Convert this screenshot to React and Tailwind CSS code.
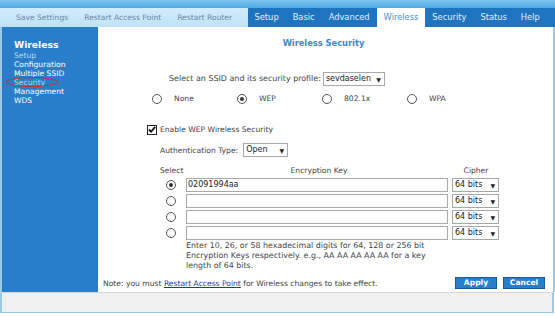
import React from "react";

const Radio = ({ checked }) => (
    <span className="inline-flex w-[10px] h-[10px] rounded-full border border-[#555] bg-white items-center justify-center">
        {checked && <span className="w-[4px] h-[4px] rounded-full bg-[#333]" />}
    </span>
);

const Select = ({ value, className = "" }) => (
    <div className={`flex items-center justify-between h-[14px] border border-[#a8a8a8] bg-white pl-[2px] pr-[3px] text-[8px] text-[#222] ${className}`}>
        <span>{value}</span>
        <span className="text-[6px]">▼</span>
    </div>
);

const App = () => {
    const leftTabs = ["Save Settings", "Restart Access Point", "Restart Router"];
    const rightTabs = ["Setup", "Basic", "Advanced", "Wireless", "Security", "Status", "Help"];
    const menu = [
        { label: "Setup", dim: true },
        { label: "Configuration" },
        { label: "Multiple SSID" },
        { label: "Security", dim: true, circled: true },
        { label: "Management" },
        { label: "WDS" },
    ];
    const keys = ["02091994aa", "", "", ""];

    return (
        <div className="w-[555px] h-[316px] bg-white overflow-hidden text-[#444]" style={{ fontFamily: '"DejaVu Sans", Verdana, sans-serif' }}>
            {/* top band */}
            <div className="h-[8px] bg-gradient-to-b from-[#7cc6f0] to-[#4da9e6]" />

            {/* tab bar */}
            <div className="flex h-[19px]">
                <div className="w-[248px] flex items-center bg-gradient-to-b from-[#d2ecfa] to-[#bfe2f7] text-[#6787a8] text-[7.6px]">
                    {leftTabs.map((t) => (
                        <span key={t} className="ml-[16px]">{t}</span>
                    ))}
                </div>
                <div className="flex-1 flex items-stretch bg-[#1f74c0] text-[#e4eef8] text-[8.3px]">
                    {rightTabs.map((t) => (
                        <span
                            key={t}
                            className={`flex items-center px-[6.5px] mr-[1px] ${t === "Wireless" ? "bg-white text-[#4a8fd0]" : ""}`}
                        >
                            {t}
                        </span>
                    ))}
                </div>
            </div>

            {/* body */}
            <div className="flex h-[265px] border-l-[2px] border-[#9cc8ea]">
                <div className="w-[96px] bg-[#2a7dc9] pl-[12px] pt-[12px]">
                    <div className="text-[9.2px] font-bold text-white leading-[12px]">Wireless</div>
                    <div className="text-[7.6px] leading-[9px]">
                        {menu.map((m) => (
                            <div key={m.label} className={`relative ${m.dim ? "text-[#b4d8f5]" : "text-white"}`}>
                                {m.label}
                                {m.circled && (
                                    <span className="absolute left-[-8px] top-[-1px] w-[52px] h-[10px] rounded-[50%] border-[1.5px] border-[#e0202a]" />
                                )}
                            </div>
                        ))}
                    </div>
                </div>

                <div className="flex-1 flex flex-col border-r-[2px] border-[#9cc8ea] text-[7.6px]">
                    <div className="text-center font-bold text-[8.3px] text-[#3a86cf] mt-[10px] ml-[-4px]">Wireless Security</div>

                    <div className="flex items-center mt-[23px] ml-[71px] text-[7.95px]">
                        <span>Select an SSID and its security profile:</span>
                        <Select value="sevdaselen" className="ml-[2px] w-[62px]" />
                    </div>

                    <div className="flex items-center mt-[7px] ml-[54px]">
                        {["None", "WEP", "802.1x", "WPA"].map((o) => (
                            <div key={o} className="flex items-center w-[85px]">
                                <Radio checked={o === "WEP"} />
                                <span className="ml-[12px]">{o}</span>
                            </div>
                        ))}
                    </div>

                    <div className="flex items-center mt-[19px] ml-[49px]">
                        <span className="w-[10px] h-[10px] border border-[#222] bg-white flex items-center justify-center">
                            <svg width="9" height="9" viewBox="0 0 9 9">
                                <path d="M1 4.5 L3.5 7 L8 1.5" fill="none" stroke="#111" strokeWidth="2" />
                            </svg>
                        </span>
                        <span className="ml-[3px]">Enable WEP Wireless Security</span>
                    </div>

                    <div className="flex items-center mt-[8px] ml-[62px]">
                        <span>Authentication Type:</span>
                        <Select value="Open" className="ml-[5px] w-[45px]" />
                    </div>

                    <div className="ml-[62px] mt-[7px] w-[340px]">
                        <div className="grid grid-cols-[26px_266px_48px] items-center h-[13px]">
                            <span>Select</span>
                            <span className="text-center">Encryption Key</span>
                            <span className="text-center">Cipher</span>
                        </div>
                        {keys.map((k, i) => (
                            <div key={i} className="grid grid-cols-[26px_266px_48px] items-center h-[16px]">
                                <span className="pl-[6px] flex"><Radio checked={i === 0} /></span>
                                <div className="h-[14px] mr-[4px] border border-[#a8a8a8] bg-white text-[8px] text-[#222] pl-[1px] flex items-center">{k}</div>
                                <Select value="64 bits" className="w-[47px]" />
                            </div>
                        ))}
                        <div className="ml-[26px] text-[7.9px] leading-[10px] text-[#444] whitespace-nowrap">
                            Enter 10, 26, or 58 hexadecimal digits for 64, 128 or 256 bit<br />
                            Encryption Keys respectively. e.g., AA AA AA AA AA for a key<br />
                            length of 64 bits.
                        </div>
                    </div>

                    <div className="flex items-center mt-[6px] ml-[5px] mr-[8px]">
                        <span>
                            Note: you must <span className="underline text-[#1c3c8c]">Restart Access Point</span> for Wireless changes to take effect.
                        </span>
                        <button className="ml-auto w-[42px] h-[12px] bg-[#2a7dc9] border border-[#185a9e] text-white font-bold text-[7.6px] leading-none">Apply</button>
                        <button className="ml-[6px] w-[42px] h-[12px] bg-[#2a7dc9] border border-[#185a9e] text-white font-bold text-[7.6px] leading-none">Cancel</button>
                    </div>
                </div>
            </div>

            {/* footer */}
            <div className="h-[21px] bg-[#f0f0f0] border-l-[2px] border-r-[2px] border-b-[1px] border-t border-[#d6d6d6] border-l-[#9cc8ea] border-r-[#9cc8ea] border-b-[#9cc8ea] w-[554px]" />
        </div>
    );
};

export default App;
